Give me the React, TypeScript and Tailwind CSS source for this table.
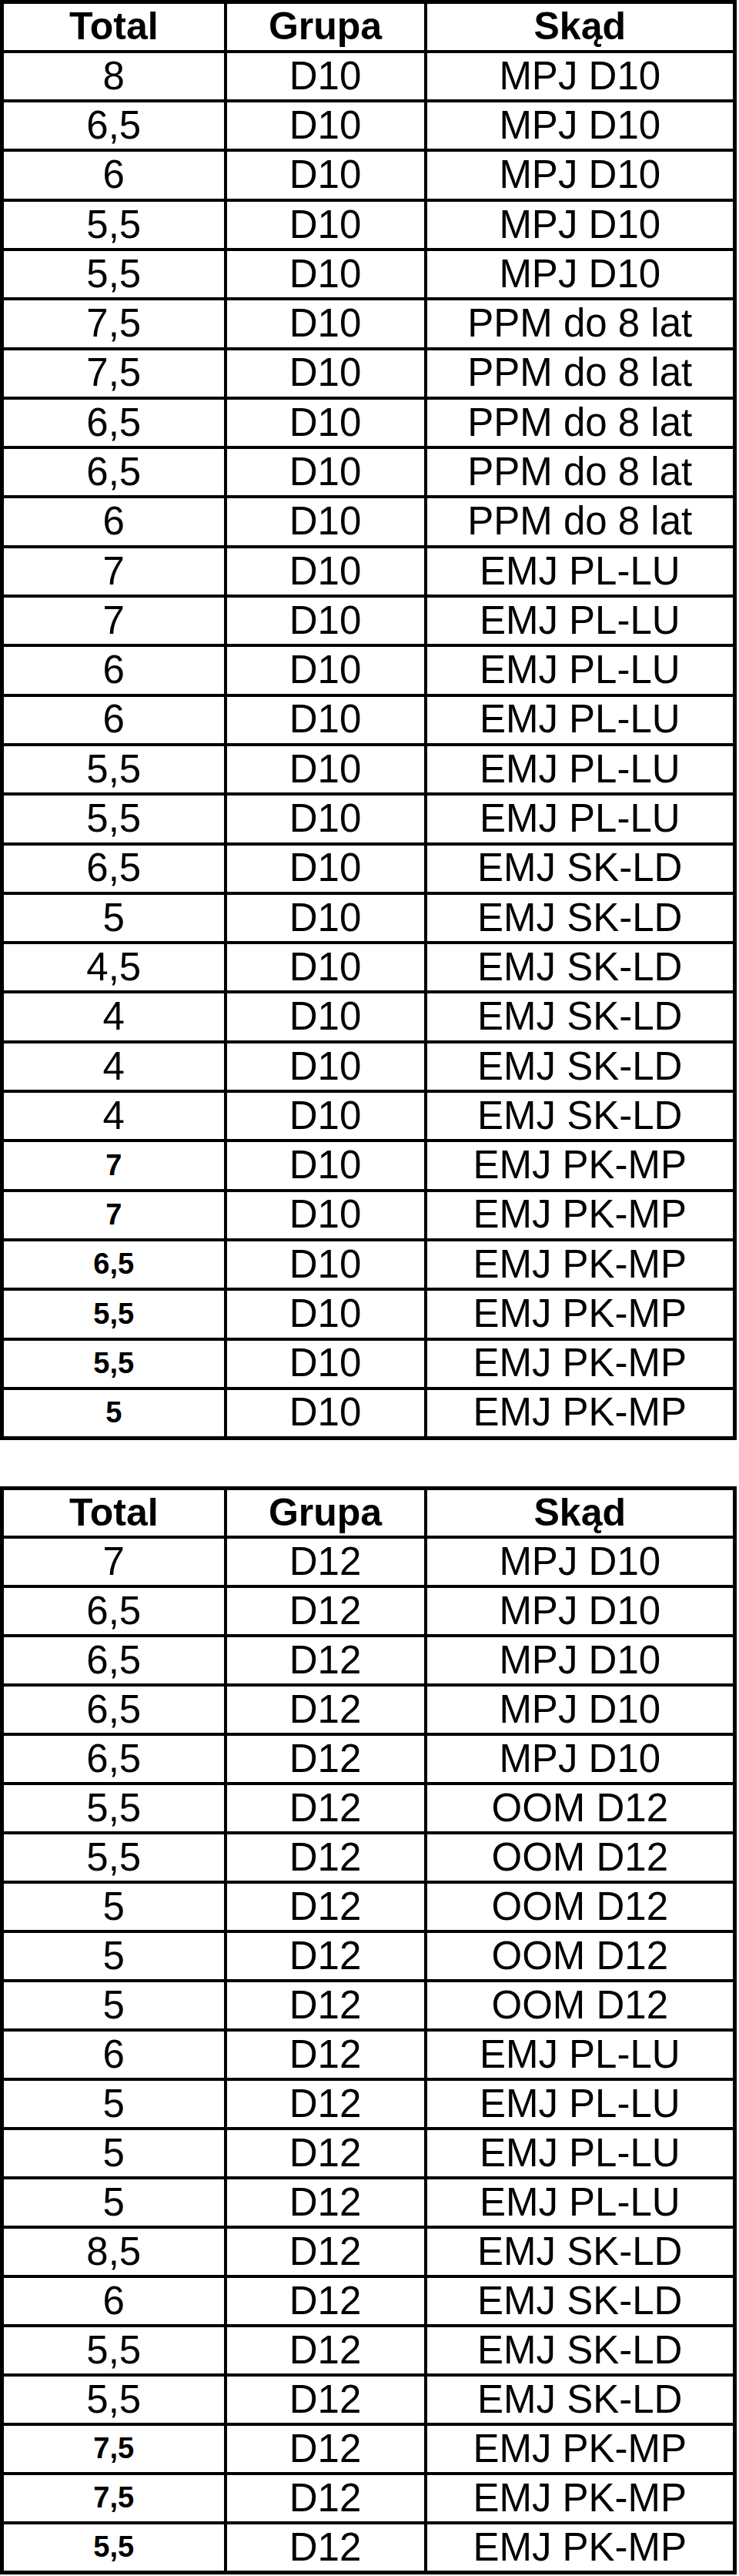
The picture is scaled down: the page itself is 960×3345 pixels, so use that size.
type Row = [string, string, string, boolean?];

const D10: Row[] = [
  ["8", "D10", "MPJ D10"],
  ["6,5", "D10", "MPJ D10"],
  ["6", "D10", "MPJ D10"],
  ["5,5", "D10", "MPJ D10"],
  ["5,5", "D10", "MPJ D10"],
  ["7,5", "D10", "PPM do 8 lat"],
  ["7,5", "D10", "PPM do 8 lat"],
  ["6,5", "D10", "PPM do 8 lat"],
  ["6,5", "D10", "PPM do 8 lat"],
  ["6", "D10", "PPM do 8 lat"],
  ["7", "D10", "EMJ PL-LU"],
  ["7", "D10", "EMJ PL-LU"],
  ["6", "D10", "EMJ PL-LU"],
  ["6", "D10", "EMJ PL-LU"],
  ["5,5", "D10", "EMJ PL-LU"],
  ["5,5", "D10", "EMJ PL-LU"],
  ["6,5", "D10", "EMJ SK-LD"],
  ["5", "D10", "EMJ SK-LD"],
  ["4,5", "D10", "EMJ SK-LD"],
  ["4", "D10", "EMJ SK-LD"],
  ["4", "D10", "EMJ SK-LD"],
  ["4", "D10", "EMJ SK-LD"],
  ["7", "D10", "EMJ PK-MP", true],
  ["7", "D10", "EMJ PK-MP", true],
  ["6,5", "D10", "EMJ PK-MP", true],
  ["5,5", "D10", "EMJ PK-MP", true],
  ["5,5", "D10", "EMJ PK-MP", true],
  ["5", "D10", "EMJ PK-MP", true],
];

const D12: Row[] = [
  ["7", "D12", "MPJ D10"],
  ["6,5", "D12", "MPJ D10"],
  ["6,5", "D12", "MPJ D10"],
  ["6,5", "D12", "MPJ D10"],
  ["6,5", "D12", "MPJ D10"],
  ["5,5", "D12", "OOM D12"],
  ["5,5", "D12", "OOM D12"],
  ["5", "D12", "OOM D12"],
  ["5", "D12", "OOM D12"],
  ["5", "D12", "OOM D12"],
  ["6", "D12", "EMJ PL-LU"],
  ["5", "D12", "EMJ PL-LU"],
  ["5", "D12", "EMJ PL-LU"],
  ["5", "D12", "EMJ PL-LU"],
  ["8,5", "D12", "EMJ SK-LD"],
  ["6", "D12", "EMJ SK-LD"],
  ["5,5", "D12", "EMJ SK-LD"],
  ["5,5", "D12", "EMJ SK-LD"],
  ["7,5", "D12", "EMJ PK-MP", true],
  ["7,5", "D12", "EMJ PK-MP", true],
  ["5,5", "D12", "EMJ PK-MP", true],
];

const cell = "border-4 border-black text-center align-middle p-0 leading-[1.15]";

function ScoreTable({ rows, rowH }: { rows: Row[]; rowH: string }) {
  return (
    <table className="border-collapse border-[5px] border-black table-fixed w-[952px]">
      <colgroup>
        <col className="w-[290px]" />
        <col className="w-[260px]" />
        <col className="w-[402px]" />
      </colgroup>
      <thead>
        <tr className={rowH}>
          <th className={`${cell} text-[50px] font-bold`}>Total</th>
          <th className={`${cell} text-[50px] font-bold`}>Grupa</th>
          <th className={`${cell} text-[50px] font-bold`}>Skąd</th>
        </tr>
      </thead>
      <tbody>
        {rows.map(([total, group, from, bold], i) => (
          <tr key={i} className={rowH}>
            <td className={`${cell} ${bold ? "text-[38px] font-bold" : "text-[51px]"}`}>{total}</td>
            <td className={`${cell} text-[51px]`}>{group}</td>
            <td className={`${cell} text-[51px]`}>{from}</td>
          </tr>
        ))}
      </tbody>
    </table>
  );
}

export default function App() {
  return (
    <div className="bg-white text-black font-['Liberation_Sans',Arial,sans-serif] w-[960px] min-h-[3345px]">
      <ScoreTable rows={D10} rowH="h-[64.3px]" />
      <div className="h-[60px]" />
      <ScoreTable rows={D12} rowH="h-[64px]" />
    </div>
  );
}
